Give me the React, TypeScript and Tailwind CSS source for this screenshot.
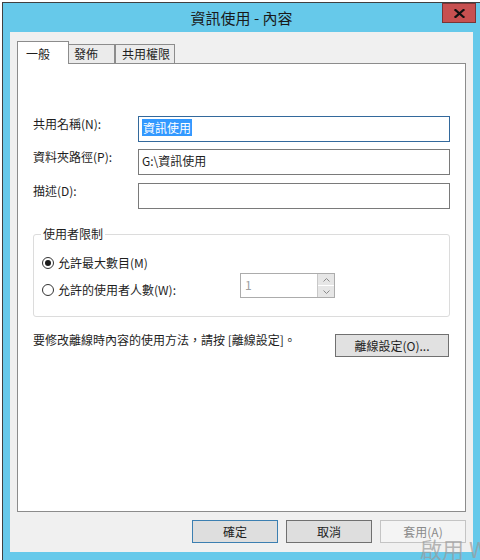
import React from 'react';

const font = "font-['Noto_Sans_CJK_TC','Noto_Sans_CJK_JP',sans-serif]";

function CloseGlyph() {
  return (
    <svg width="11" height="9" viewBox="0 0 11 9">
      <path d="M1.5 1 L9.5 8 M9.5 1 L1.5 8" stroke="#111" strokeWidth="2.2" strokeLinecap="square" />
    </svg>
  );
}

function Chevron({ up }: { readonly up?: boolean }) {
  return (
    <svg width="7" height="4" viewBox="0 0 7 4">
      <path d={up ? 'M0.5 3.5 L3.5 0.5 L6.5 3.5' : 'M0.5 0.5 L3.5 3.5 L6.5 0.5'} stroke="#8a8a8a" strokeWidth="1" fill="none" />
    </svg>
  );
}

function Radio({ checked }: { readonly checked?: boolean }) {
  return (
    <span className="flex h-[12px] w-[12px] shrink-0 items-center justify-center rounded-full border border-[#333] bg-white">
      {checked && <span className="h-[6px] w-[6px] rounded-full bg-[#1a1a1a]" />}
    </span>
  );
}

function FieldRow({ label, children, first }: { readonly label: string; readonly children: React.ReactNode; readonly first?: boolean }) {
  return (
    <div className={`flex items-start ${first ? 'mt-[52px]' : ''}`}>
      <div className="w-[105px] leading-[16px]">{label}</div>
      {children}
    </div>
  );
}

export default function App(): React.JSX.Element {
  return (
    <div className={`relative h-[560px] w-[480px] overflow-hidden bg-white pl-[2px] pt-[2px] text-[12px] text-[#1e1e1e] ${font}`}>
      <div className="flex h-[558px] w-[478px] flex-col border-l border-t border-[#404040] bg-[#66c9ea]">
        {/* title bar */}
        <div className="grid h-[29px] grid-cols-[1fr_auto_1fr] items-start">
          <div />
          <div className="self-center text-[15px] leading-[20px] text-[#1a1a1a]">資訊使用 - 內容</div>
          <div className="flex justify-end pr-[4px]">
            <button className="flex h-[20px] w-[34px] items-center justify-center border border-[#7a3535] bg-[#c75050]">
              <CloseGlyph />
            </button>
          </div>
        </div>

        {/* client */}
        <div className="ml-[7px] flex h-[520px] w-[463px] flex-col bg-[#f0f0f0] pl-[7px]">
          {/* tabs */}
          <div className="mt-[9px] flex items-end">
            <div className="relative z-10 -mb-px h-[23px] w-[52px] border-l border-r border-t border-[#8c8c8c] bg-white pl-[8px] pt-[3px] leading-[18px]">
              一般
            </div>
            <div className="h-[19px] w-[46px] border-r border-t border-[#8c8c8c] bg-[#ebebeb] pl-[5px] leading-[18px]">發佈</div>
            <div className="h-[19px] w-[60px] border-l border-r border-t border-[#8c8c8c] bg-[#ebebeb] pl-[6px] leading-[18px]">
              共用權限
            </div>
          </div>

          {/* panel */}
          <div className="flex h-[449px] w-[449px] flex-col border border-[#8c8c8c] bg-white pl-[15px]">
            <FieldRow label="共用名稱(N):" first>
              <div className="h-[26px] w-[312px] border border-[#33699c] pl-[3px] pt-[3px] leading-[16px]">
                <span className="bg-[#3399ff] px-px text-white">資訊使用</span>
              </div>
            </FieldRow>
            <div className="mt-[7px]">
              <FieldRow label="資料夾路徑(P):">
                <div className="h-[26px] w-[312px] border border-[#7a7a7a] pl-[3px] pt-[3px] leading-[16px]">G:\資訊使用</div>
              </FieldRow>
            </div>
            <div className="mt-[8px]">
              <FieldRow label="描述(D):">
                <div className="h-[26px] w-[312px] border border-[#7a7a7a]" />
              </FieldRow>
            </div>

            {/* group box */}
            <div className="mt-[25px] flex h-[83px] w-[417px] flex-col rounded-[3px] border border-[#dcdcdc]">
              <div className="-mt-[9px] ml-[7px] w-fit bg-white px-[2px] leading-[16px]">使用者限制</div>
              <div className="ml-[8px] mt-[13px] flex items-center gap-[4px] leading-[16px]">
                <Radio checked />
                <span>允許最大數目(M)</span>
              </div>
              <div className="ml-[8px] mt-[11px] flex items-start leading-[16px]">
                <div className="flex w-[198px] items-center gap-[4px]">
                  <Radio />
                  <span>允許的使用者人數(W):</span>
                </div>
                <div className="-mt-[9px] flex h-[25px] w-[95px] border border-[#acacac] bg-white">
                  <div className="flex-1 pl-[4px] pt-[3px] leading-[16px] text-[#a0a0a0]">1</div>
                  <div className="flex w-[17px] flex-col gap-px border-l border-[#c8c8c8] bg-white">
                    <div className="flex flex-1 items-center justify-center bg-[#e6e6e6]">
                      <Chevron up />
                    </div>
                    <div className="flex flex-1 items-center justify-center bg-[#e6e6e6]">
                      <Chevron />
                    </div>
                  </div>
                </div>
              </div>
            </div>

            {/* offline row */}
            <div className="mt-[15px] flex items-start pr-[16px]">
              <div className="leading-[16px]">要修改離線時內容的使用方法，請按 [離線設定]。</div>
              <button className="ml-auto mt-[2px] h-[23px] w-[114px] border border-[#707070] bg-[#e1e1e1] pt-px leading-[18px]">
                離線設定(O)...
              </button>
            </div>
          </div>

          {/* dialog buttons */}
          <div className="mt-[8px] flex justify-end gap-[8px] pr-[7px]">
            <button className="h-[23px] w-[86px] border border-[#3c7fb1] bg-[#dedede] leading-[20px]">確定</button>
            <button className="h-[23px] w-[86px] border border-[#707070] bg-[#dedede] leading-[20px]">取消</button>
            <button className="h-[23px] w-[86px] border border-[#c4c4c4] bg-[#f4f4f4] leading-[20px] text-[#8a8a8a]">
              套用(A)
            </button>
          </div>
        </div>
      </div>

      {/* activation watermark */}
      <div className="pointer-events-none absolute left-[420px] top-[535px] whitespace-nowrap text-[22px] leading-[26px] text-[#9a9a9a]/70">
        啟用 W
      </div>
    </div>
  );
}
